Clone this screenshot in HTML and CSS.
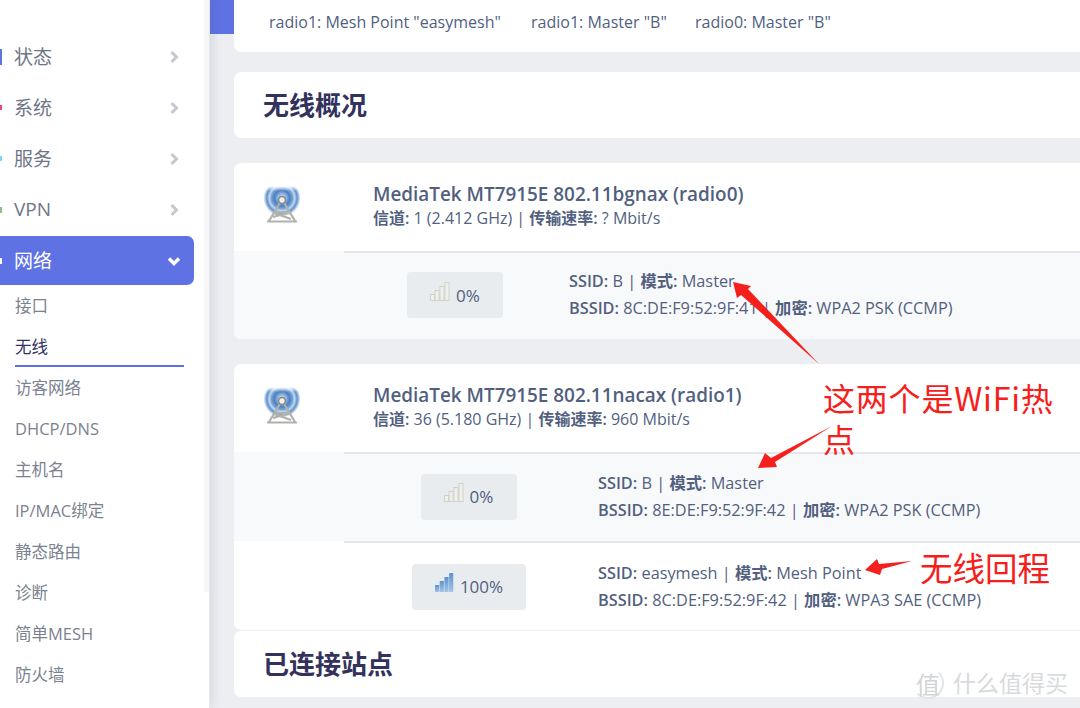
FILE: index.html
```html
<!DOCTYPE html>
<html lang="en">
<head>
  <meta charset="UTF-8" />
  <title>无线概况</title>
  <link rel="stylesheet" href="styles.css">
</head>
<body>
  <div class="page">
    <nav class="sidebar">
      <a class="nav-item"><span class="nav-mark mark-blue"></span><span class="nav-label">状态</span>
        <svg class="chevron" viewBox="0 0 10 14"><polyline points="2.5,2 7.5,7 2.5,12"/></svg></a>
      <a class="nav-item"><span class="nav-mark mark-pink"></span><span class="nav-label">系统</span>
        <svg class="chevron" viewBox="0 0 10 14"><polyline points="2.5,2 7.5,7 2.5,12"/></svg></a>
      <a class="nav-item"><span class="nav-mark mark-sky"></span><span class="nav-label">服务</span>
        <svg class="chevron" viewBox="0 0 10 14"><polyline points="2.5,2 7.5,7 2.5,12"/></svg></a>
      <a class="nav-item"><span class="nav-mark mark-green"></span><span class="nav-label">VPN</span>
        <svg class="chevron" viewBox="0 0 10 14"><polyline points="2.5,2 7.5,7 2.5,12"/></svg></a>
      <a class="nav-item active"><span class="nav-mark mark-white"></span><span class="nav-label">网络</span>
        <svg class="chevron" viewBox="0 0 14 10"><polyline points="2,2.5 7,7.5 12,2.5"/></svg></a>
      <ul class="subnav">
        <li>接口</li>
        <li class="current">无线</li>
        <li>访客网络</li>
        <li>DHCP/DNS</li>
        <li>主机名</li>
        <li>IP/MAC绑定</li>
        <li>静态路由</li>
        <li>诊断</li>
        <li>简单MESH</li>
        <li>防火墙</li>
      </ul>
    </nav>

    <main class="main">
      <section class="card tabs">
        <span class="tab tab-mesh">radio1: Mesh Point "easymesh"</span>
        <span class="tab tab-one">radio1: Master "B"</span>
        <span class="tab">radio0: Master "B"</span>
      </section>

      <section class="card heading-card"><h2>无线概况</h2></section>

      <section class="card radio-card">
        <div class="radio-head">
          <svg class="tower" viewBox="0 0 38 38"><use href="#tower-icon"/></svg>
          <div class="radio-title">
            <h3>MediaTek MT7915E 802.11bgnax (radio0)</h3>
            <p><b>信道:</b> 1 (2.412 GHz) | <b>传输速率:</b> ? Mbit/s</p>
          </div>
        </div>
        <div class="net-row shaded short">
          <div class="net-body">
            <div class="signal-cell narrow"><span class="badge"><svg class="bars" viewBox="0 0 20 19"><use href="#bars-off"/></svg>0%</span></div>
            <div class="net-info">
              <p><b>SSID:</b> B | <b>模式:</b> Master</p>
              <p><b>BSSID:</b> 8C:DE:F9:52:9F:41 | <b>加密:</b> WPA2 PSK (CCMP)</p>
            </div>
          </div>
        </div>
      </section>

      <section class="card radio-card">
        <div class="radio-head">
          <svg class="tower" viewBox="0 0 38 38"><use href="#tower-icon"/></svg>
          <div class="radio-title">
            <h3>MediaTek MT7915E 802.11nacax (radio1)</h3>
            <p><b>信道:</b> 36 (5.180 GHz) | <b>传输速率:</b> 960 Mbit/s</p>
          </div>
        </div>
        <div class="net-row shaded">
          <div class="net-body">
            <div class="signal-cell"><span class="badge"><svg class="bars" viewBox="0 0 20 19"><use href="#bars-off"/></svg>0%</span></div>
            <div class="net-info">
              <p><b>SSID:</b> B | <b>模式:</b> Master</p>
              <p><b>BSSID:</b> 8E:DE:F9:52:9F:42 | <b>加密:</b> WPA2 PSK (CCMP)</p>
            </div>
          </div>
        </div>
        <div class="net-row">
          <div class="net-body">
            <div class="signal-cell"><span class="badge wide"><svg class="bars" viewBox="0 0 20 19"><use href="#bars-on"/></svg>100%</span></div>
            <div class="net-info">
              <p><b>SSID:</b> easymesh | <b>模式:</b> Mesh Point</p>
              <p><b>BSSID:</b> 8C:DE:F9:52:9F:42 | <b>加密:</b> WPA3 SAE (CCMP)</p>
            </div>
          </div>
        </div>
      </section>

      <section class="card heading-card last"><h2>已连接站点</h2></section>
    </main>

    <!-- red notes drawn on top of the screenshot -->
    <svg class="arrows" viewBox="0 0 1080 708">
      <polygon points="733,282 751,286 748,289 819,364 741,295 737,298"/>
      <polygon points="758,468 765,453 771,458 832,426 775,462 777,467"/>
      <polygon points="865,570 877,559 879,564 912,561 882,569 880,575"/>
    </svg>
    <div class="note note-hotspot">这两个是WiFi热点</div>
    <div class="note note-backhaul">无线回程</div>

    <div class="watermark"><span class="wm-circle">值</span>什么值得买</div>
  </div>

  <svg class="defs" width="0" height="0">
    <defs>
      <radialGradient id="wave" gradientUnits="userSpaceOnUse" cx="19" cy="12" r="18.500">
        <stop offset="0" stop-color="#e8eff8"/>
        <stop offset="0.2" stop-color="#9dbde2"/>
        <stop offset="0.42" stop-color="#4a80c2"/>
        <stop offset="0.58" stop-color="#7aa5d6"/>
        <stop offset="0.68" stop-color="#c3d7ee"/>
        <stop offset="0.82" stop-color="#5f92cc"/>
        <stop offset="0.93" stop-color="#bcd2ea"/>
        <stop offset="1" stop-color="#ffffff"/>
      </radialGradient>
      <linearGradient id="fade-top" x1="0" y1="0" x2="0" y2="1">
        <stop offset="0" stop-color="#ffffff"/>
        <stop offset="1" stop-color="#ffffff" stop-opacity="0"/>
      </linearGradient>
      <linearGradient id="bar-blue" x1="0" y1="0" x2="0" y2="1">
        <stop offset="0" stop-color="#5d93cf"/>
        <stop offset="1" stop-color="#a5c4e6"/>
      </linearGradient>
      <g id="tower-icon">
        <circle cx="19" cy="12" r="18.500" fill="url(#wave)"/>
        <rect x="0" y="0" width="38" height="5" fill="url(#fade-top)"/>
        <g fill="none" stroke="#b0b2ad" stroke-width="2.200">
          <path d="M18 15 L6 35 M20 15 L32 35 M4 35.500 H34 M13 26 H25 M10 31 L27 26 M11 27 L28 33"/>
        </g>
        <circle cx="19" cy="14" r="3.400" fill="#f0f0ec" stroke="#85878a" stroke-width="1.500"/>
      </g>
      <g id="bars-off" fill="#f0f1ec" stroke="#d0d2cc">
        <rect x="0.500" y="12.500" width="4" height="6"/>
        <rect x="5" y="8.500" width="4" height="10"/>
        <rect x="10" y="4.500" width="4" height="14"/>
        <rect x="15" y="0.500" width="4" height="18"/>
      </g>
      <g id="bars-on" fill="url(#bar-blue)">
        <rect x="1" y="12" width="4.200" height="7"/>
        <rect x="5.700" y="8" width="4.200" height="11"/>
        <rect x="10.400" y="4" width="4.200" height="15"/>
        <rect x="15.100" y="0" width="4.200" height="19" rx="1"/>
      </g>
    </defs>
  </svg>
</body>
</html>
```

FILE: styles.css
```css
* {
  box-sizing: border-box;
}

body {
  margin: 0;
  font-family: "Open Sans", "Noto Sans CJK SC", sans-serif;
  color: #525f7f;
  background: #eceef2;
  overflow: hidden;
}

p, h2, h3, ul {
  margin: 0;
  padding: 0;
}

b {
  font-weight: 600;
}

.page {
  position: relative;
  display: flex;
  width: 1080px;
  height: 708px;
  overflow: hidden;
}

/* sidebar, the lighter strip is the scrollbar track */
.sidebar {
  flex: none;
  width: 210px;
  height: 708px;
  padding-top: 32px;
  background: linear-gradient(90deg, #fff 204px, #f6f7f9 204px) no-repeat 0 0 / 100% 592px, #fff;
  border-right: 1px solid #e6e8ec;
  box-shadow: 2px 0 10px rgba(60, 70, 100, 0.14);
  position: relative;
  z-index: 1;
}

.nav-item {
  display: flex;
  align-items: center;
  width: 194px;
  height: 49px;
  margin-bottom: 2px;
  padding-right: 13px;
  border-radius: 0 7px 7px 0;
  font-size: 19px;
  color: #6d7686;
}

.nav-item.active {
  background: #5e72e4;
  color: #fff;
  margin-bottom: 0;
}

.nav-mark {
  width: 2px;
  height: 16px;
  margin-right: 13px;
}

.mark-blue { background: #5e72e4; }
.mark-pink { background: #f3447f; height: 5px; }
.mark-sky { background: #7fd6f0; height: 5px; }
.mark-green { background: #8fbf8a; height: 6px; }
.mark-white { background: #fff; height: 6px; }

.nav-label {
  flex: 1;
  margin-left: -1px;
  padding-bottom: 1px;
}

.chevron {
  width: 14px;
  height: 14px;
  fill: none;
  stroke: #c4c8cf;
  stroke-width: 3;
}

.active .chevron {
  stroke: #fff;
  stroke-width: 3.400;
}

.subnav {
  list-style: none;
  width: 184px;
  padding-left: 15px;
  font-size: 16.500px;
  color: #7b8290;
}

.subnav li {
  height: 41px;
  line-height: 41px;
}

.subnav .current {
  color: #32325d;
  border-bottom: 2px solid #5e72e4;
}

/* main column */
.main {
  flex: 1;
  min-width: 0;
  padding-left: 24px;
  overflow: hidden;
  background: linear-gradient(#5e72e4 34px, #eceef2 34px);
}

.card {
  width: 900px;
  background: #fff;
  border-radius: 7px;
  margin-bottom: 25px;
}

.tabs {
  display: flex;
  align-items: center;
  height: 52px;
  margin-bottom: 20px;
  padding: 0 0 8px 35px;
  border-radius: 0 0 7px 7px;
  font-size: 16px;
}

.tab-mesh {
  width: 262px;
}

.tab-one {
  width: 164px;
}

.heading-card {
  display: flex;
  align-items: center;
  height: 66px;
  padding: 0 0 2px 29px;
}

.heading-card h2 {
  font-size: 26px;
  font-weight: 700;
  color: #32325d;
}

.heading-card.last {
  margin: 0;
}

.radio-card {
  overflow: hidden;
}

.radio-card + .radio-card {
  margin-bottom: 1px;
}

.radio-head {
  display: flex;
  align-items: center;
  height: 88px;
}

.tower {
  flex: none;
  width: 38px;
  height: 38px;
  margin: 0 72px 4px 29px;
}

.radio-title {
  padding-bottom: 3px;
}

.radio-title h3 {
  font-size: 18.900px;
  font-weight: 600;
  line-height: 25px;
}

.radio-title p {
  font-size: 16px;
  line-height: 23px;
}

.net-row {
  height: 89px;
  padding-left: 110px;
}

.net-row.short {
  height: 88px;
}

.net-row.shaded {
  background: #f8f9fa;
}

.net-body {
  display: flex;
  align-items: center;
  height: 100%;
  border-top: 2px solid #e4e6ea;
}

.shaded .net-body {
  padding-bottom: 2px;
}

.signal-cell {
  flex: none;
  display: flex;
  justify-content: center;
  width: 249px;
  margin-right: 5px;
}

.signal-cell.narrow {
  width: 222px;
  margin-right: 3px;
}

.badge {
  display: flex;
  align-items: center;
  justify-content: center;
  gap: 6px;
  width: 96px;
  height: 46px;
  background: #e9ecef;
  border-radius: 4px;
  font-size: 17px;
}

.badge.wide {
  width: 114px;
}

.bars {
  width: 20px;
  height: 19px;
  margin-bottom: 8px;
}

.net-info p {
  font-size: 16.300px;
  line-height: 27px;
}

.defs {
  position: absolute;
}

/* annotations */
.arrows {
  position: absolute;
  top: 0;
  left: 0;
  width: 1080px;
  height: 708px;
  z-index: 2;
  fill: #f5201c;
}

.note {
  position: absolute;
  z-index: 2;
  color: #f5201c;
  font-family: "Noto Sans CJK SC", sans-serif;
  font-weight: 400;
}

.note-hotspot {
  left: 823px;
  top: 377px;
  width: 240px;
  font-size: 32px;
  line-height: 41px;
  letter-spacing: 0.800px;
}

.note-backhaul {
  left: 920px;
  top: 545px;
  font-size: 32.500px;
  line-height: 44px;
}

.watermark {
  position: absolute;
  z-index: 2;
  left: 912px;
  top: 664px;
  display: flex;
  align-items: center;
  gap: 9px;
  font-family: "Noto Sans CJK SC", sans-serif;
  font-size: 23px;
  color: #d8dadc;
}

.wm-circle {
  display: flex;
  align-items: center;
  justify-content: center;
  width: 32px;
  height: 32px;
  margin-top: 3px;
  border: 2px solid #e4e5e7;
  border-top-color: transparent;
  border-left-color: transparent;
  border-radius: 50%;
  font-size: 24px;
  color: #d2d4d6;
}
```
